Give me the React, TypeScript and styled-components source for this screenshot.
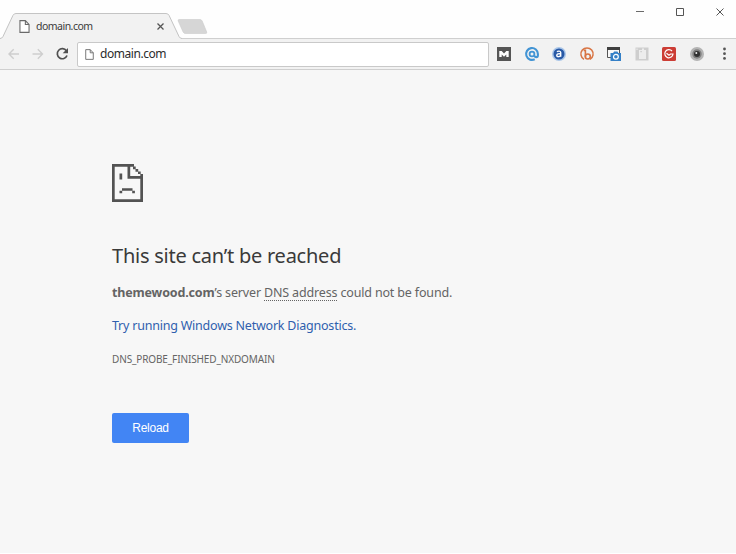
/**
 * A browser window showing the "This site can't be reached" error page.
 */

import React from "react";
import styled, { createGlobalStyle } from "styled-components";

const TitleBarHeight = 39;
const ToolbarHeight = 31;

const GlobalStyle = createGlobalStyle`
  * {
    box-sizing: border-box;
  }

  body {
    margin: 0;
    background: #ffffff;
    font-family: "Noto Sans", "Open Sans", sans-serif;
  }
`;

//# region window chrome

const Window = styled.div`
  display: flex;
  flex-direction: column;
  width: 736px;
  height: 554px;
  overflow: hidden;
  background: #ffffff;
`;

const TitleBar = styled.header`
  display: flex;
  justify-content: space-between;
  align-items: flex-start;
  flex: none;
  height: ${TitleBarHeight}px;
  background: #fefefe;
  box-shadow: 0 -1px 0 #cfcfcf inset;
`;

const TabStrip = styled.div`
  display: flex;
  height: 100%;
  padding-top: 13px;
`;

const Tab = styled.div`
  position: relative;
  display: flex;
  align-items: center;
  width: 182px;
  height: 26px;
  padding: 0 17px 0 19px;
`;

const TabShape = styled.svg`
  position: absolute;
  inset: 0;
`;

const TabTitle = styled.span`
  position: relative;
  flex: 1;
  margin-left: 6px;
  color: #3c3c3c;
  font-size: 10.5px;
  line-height: 16px;
  letter-spacing: -0.52px;
`;

const NewTab = styled.svg`
  margin: 6px 0 0 -5px;
`;

const WindowButtons = styled.div`
  display: flex;
  gap: 30px;
  padding: 7px 11px 0 0;
`;

const Glyph = styled.svg`
  position: relative;
  display: block;
  flex: none;
`;

const Toolbar = styled.nav`
  display: flex;
  align-items: center;
  flex: none;
  height: ${ToolbarHeight}px;
  padding-left: 7px;
  background: #f2f2f2;
  border-bottom: 1px solid #cfcfcf;
`;

const NavButtons = styled.div`
  display: flex;
  gap: 10px;
  width: 70px;
`;

const AddressBar = styled.div`
  display: flex;
  align-items: center;
  width: 412px;
  height: 25px;
  padding-left: 7px;
  background: #ffffff;
  border: 1px solid #c9c9c9;
  border-radius: 2px;
`;

const Address = styled.span`
  margin-left: 6px;
  color: #2c2c2c;
  font-size: 12px;
  line-height: 18px;
  letter-spacing: -0.45px;
`;

const Extensions = styled.div`
  display: flex;
  align-items: center;
  gap: 11.5px;
  margin-left: 7px;
`;

//# endregion

//# region error page

const Page = styled.main`
  flex: 1;
  margin-bottom: 1px;
  padding: 94px 0 0 112px;
  background: #f7f7f7;
  color: #646464;
  font-size: 12.5px;
  line-height: 18px;
`;

const Title = styled.h1`
  margin: 40px 0 0;
  color: #3a3a3a;
  font-size: 20px;
  font-weight: 400;
  line-height: 28px;
  letter-spacing: -0.24px;
`;

const Summary = styled.p`
  margin: 14px 0 0;
  letter-spacing: -0.16px;
`;

const Hint = styled.abbr`
  display: inline-block;
  line-height: 14px;
  border-bottom: 1px dotted #646464;
`;

const DiagnosticsLink = styled.a`
  display: block;
  margin-top: 15px;
  color: #2f5fae;
  letter-spacing: -0.22px;
`;

const ErrorCode = styled.div`
  margin-top: 16px;
  font-size: 10px;
  line-height: 16px;
  letter-spacing: -0.13px;
`;

const ReloadButton = styled.button`
  display: block;
  width: 77px;
  height: 30px;
  margin-top: 46px;
  padding: 0 0 1px;
  background: #4285f4;
  border: 0;
  border-radius: 2px;
  color: #ffffff;
  font-family: "Liberation Sans", Arial, sans-serif;
  font-size: 12px;
  letter-spacing: -0.25px;
`;

//# endregion

interface FileIconProps {
  width: number;
  height: number;
}

function FileIcon({ width, height }: FileIconProps) {
  return (
    <Glyph
      width={width}
      height={height}
      viewBox="0 0 10 12"
      fill="#ffffff"
      stroke="#6a6a6a"
    >
      <path d="M.8.6h5l3.4 3.5v7.3H.8zM5.8.6v3.5h3.4" />
    </Glyph>
  );
}

function SadFile() {
  return (
    <Glyph width="31" height="38" viewBox="0 0 31 38" fill="#535353">
      <path d="M0 0h22v2.7H2.7v32.6h25.6V10H31v28H0z" />
      <path d="M15.5 0h2.7v12H31v2.7H15.5z" />
      <path d="M21 2.5h2.7v2.7H21zM23.5 5h2.7v2.7h-2.7zM26 7.4h2.7v2.7H26z" />
      <path d="M7.5 9.5h2.7v6H7.5zM10 24.2h10.5v2.6H10zM7.5 26.7h2.7v2.6H7.5zM20.2 26.7h2.7v2.6h-2.7z" />
    </Glyph>
  );
}

function ExtensionIcons() {
  return (
    <Extensions>
      <Glyph width="16" height="16" viewBox="0 0 16 16">
        <path fill="#555555" d="M1 1h14v14H1z" />
        <path
          fill="#ffffff"
          d="M3.3 11V5h2.4L8 7.5 10.3 5h2.4v6h-2.4V8.4L8 10.8 5.7 8.4V11z"
        />
      </Glyph>
      <Glyph
        width="16"
        height="16"
        viewBox="0 0 16 16"
        fill="none"
        stroke="#4294d4"
      >
        <path
          strokeWidth="2.1"
          d="M10.7 13.2A5.9 5.9 0 1 1 13.9 8v1.2q0 1.9-1.6 1.9-1.3 0-2.1-1.2"
        />
        <circle cx="8" cy="8" r="2.4" strokeWidth="1.8" />
      </Glyph>
      <Glyph width="16" height="16" viewBox="0 0 16 16">
        <circle cx="8" cy="8" r="7" fill="#a9c5e8" />
        <circle cx="8" cy="8" r="5.5" fill="#2859a6" />
        <path
          fill="none"
          stroke="#ffffff"
          strokeWidth="1.4"
          d="M6 5.8c.9-1 3.7-1 3.7.7v4.3M9.7 7.8C7.4 7.5 5.8 8 5.8 9.4c0 1.9 3.1 1.5 3.9 0"
        />
      </Glyph>
      <Glyph
        width="16"
        height="16"
        viewBox="0 0 16 16"
        fill="none"
        stroke="#d87443"
      >
        <path strokeWidth="1.5" d="M5 13.3A6.1 6.1 0 1 1 11 13.3" />
        <path strokeWidth="1.6" d="M4.7 4.4h1.7v6.8" />
        <circle cx="8.8" cy="10.5" r="2.5" strokeWidth="1.6" />
      </Glyph>
      <Glyph width="16" height="16" viewBox="0 0 16 16">
        <path fill="#f8f8f8" stroke="#555555" d="M1.5 2h12v9.5h-12z" />
        <path fill="#3f3f3f" d="M1 1h13v3H1z" />
        <path fill="#3480c7" d="M4.5 7h2.6l1-1.5h3.3l1 1.5H15v8H4.5z" />
        <circle
          cx="9.9"
          cy="10.8"
          r="2.4"
          fill="none"
          stroke="#ffffff"
          strokeWidth="1.2"
        />
      </Glyph>
      <Glyph width="16" height="16" viewBox="0 0 16 16">
        <path fill="#cecece" d="M1.5 1.5h13v13h-13z" />
        <path fill="#ededed" d="M5 4h3V2.5h2V4h2v9H5zM2.5 2.5h1v1.4h-1z" />
        <path fill="#c4c4c4" d="M6.5 5h1.2v1.2H6.5z" />
      </Glyph>
      <Glyph width="16" height="16" viewBox="0 0 16 16">
        <rect x="1" y="1" width="14" height="14" rx="1.5" fill="#cc3d35" />
        <path
          fill="none"
          stroke="#ffffff"
          strokeWidth="1.2"
          d="M11 5A4.1 4.1 0 1 0 12 8H9.5L8 9.2 5.5 7.3"
        />
      </Glyph>
      <Glyph width="16" height="16" viewBox="0 0 16 16">
        <circle cx="8" cy="8" r="7" fill="#b4b4b4" />
        <circle cx="8" cy="8" r="4.7" fill="#808080" />
        <circle cx="8" cy="8" r="3" fill="#303030" />
        <circle cx="7.3" cy="7" r="1" fill="#eeeeee" />
      </Glyph>
      <Glyph width="16" height="16" viewBox="0 0 16 16" fill="#555555">
        <circle cx="8.5" cy="3" r="1.4" />
        <circle cx="8.5" cy="7.7" r="1.4" />
        <circle cx="8.5" cy="12.4" r="1.4" />
      </Glyph>
    </Extensions>
  );
}

function App() {
  return (
    <Window>
      <GlobalStyle />
      <TitleBar>
        <TabStrip>
          <Tab>
            <TabShape width="182" height="26" viewBox="0 0 182 26">
              <path
                fill="#f2f2f2"
                d="M0 26 2.5 24 13 2.3Q14 .5 16 .5h150q2 0 3 1.8L179.5 24l2.5 2z"
              />
              <path
                fill="none"
                stroke="#c4c4c4"
                d="M0 25.5q2 0 3-2L13 2.3Q14 .5 16 .5h150q2 0 3 1.8L179 23.5q1 2 3 2"
              />
            </TabShape>
            <FileIcon width={11} height={13} />
            <TabTitle>domain.com</TabTitle>
            <Glyph width="9" height="9" viewBox="0 0 9 9" stroke="#555555">
              <path strokeWidth="1.3" d="m1.5 1.5 6 6m0-6-6 6" />
            </Glyph>
          </Tab>
          <NewTab width="31" height="15" viewBox="0 0 31 15">
            <path
              fill="#d6d6d6"
              stroke="#cbcbcb"
              strokeWidth=".6"
              d="M2 .5h21q1.5 0 2.2 1.5l4.5 11q.4 1.5-1 1.5H8.5q-1.7 0-2.4-1.5L1.2 2Q.8.5 2 .5z"
            />
          </NewTab>
        </TabStrip>
        <WindowButtons>
          <Glyph width="10" height="10" viewBox="0 0 10 10">
            <path stroke="#6a6a6a" d="M1 4.5h8" />
          </Glyph>
          <Glyph width="10" height="10" viewBox="0 0 10 10">
            <path fill="none" stroke="#555555" d="M1.5 1.5h7v7h-7z" />
          </Glyph>
          <Glyph width="10" height="10" viewBox="0 0 10 10">
            <path stroke="#555555" d="m1.5 1.5 7 7m0-7-7 7" />
          </Glyph>
        </WindowButtons>
      </TitleBar>

      <Toolbar>
        <NavButtons>
          <Glyph
            width="14"
            height="14"
            viewBox="0 0 14 14"
            fill="none"
            stroke="#cecece"
          >
            <path strokeWidth="1.4" d="M12 7H2m4.7-4.7L2 7l4.7 4.7" />
          </Glyph>
          <Glyph
            width="14"
            height="14"
            viewBox="0 0 14 14"
            fill="none"
            stroke="#cecece"
          >
            <path strokeWidth="1.4" d="M1.5 7h10M6.8 2.3 11.5 7l-4.7 4.7" />
          </Glyph>
          <Glyph width="14" height="14" viewBox="0 0 14 14">
            <path
              fill="none"
              stroke="#505050"
              strokeWidth="1.7"
              d="M11.4 3.8A5 5 0 1 0 12 8.5"
            />
            <path fill="#505050" d="M13 1v5.3H7.7z" />
          </Glyph>
        </NavButtons>
        <AddressBar>
          <FileIcon width={9} height={11} />
          <Address>domain.com</Address>
        </AddressBar>
        <ExtensionIcons />
      </Toolbar>

      <Page>
        <SadFile />
        <Title>This site can’t be reached</Title>
        <Summary>
          <strong>themewood.com</strong>’s server <Hint>DNS address</Hint> could
          not be found.
        </Summary>
        <DiagnosticsLink>Try running Windows Network Diagnostics.</DiagnosticsLink>
        <ErrorCode>DNS_PROBE_FINISHED_NXDOMAIN</ErrorCode>
        <ReloadButton>Reload</ReloadButton>
      </Page>
    </Window>
  );
}

export default App;
